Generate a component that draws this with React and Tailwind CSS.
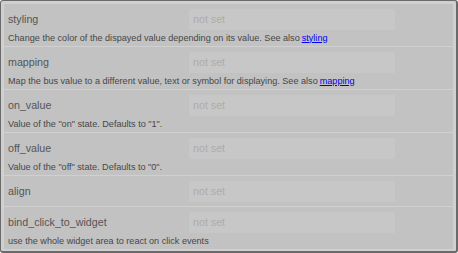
import React from 'react';

const rows = [
  {
    name: 'styling',
    desc: 'Change the color of the dispayed value depending on its value. See also ',
    link: 'styling',
  },
  {
    name: 'mapping',
    desc: 'Map the bus value to a different value, text or symbol for displaying. See also ',
    link: 'mapping',
  },
  { name: 'on_value', desc: 'Value of the "on" state. Defaults to "1".' },
  { name: 'off_value', desc: 'Value of the "off" state. Defaults to "0".' },
  { name: 'align' },
  { name: 'bind_click_to_widget', desc: 'use the whole widget area to react on click events' },
];

function PropertyRow({ row }) {
  return (
    <div className="bg-[#c2c2c2] border-t border-[#d0d0d0] first:border-t-0 pl-1 pt-[5px] pb-[1px]">
      <div className="flex items-center h-[21px]">
        <div className="w-[181px] text-[10.7px] text-[#555555]">{row.name}</div>
        <div className="w-[206px] h-[21px] bg-[#c7c7c7] flex items-center px-1 text-[10.7px] text-[#acacac]">
          not set
        </div>
      </div>
      {row.desc ? (
        <div className="h-[13px] mt-[2px] flex items-center text-[9.1px] text-[#474747] whitespace-nowrap">
          {row.desc}
          {row.link && <a href="#" className="text-[#0000ee] underline ml-[2px]">{row.link}</a>}
        </div>
      ) : (
        <div className="h-[3px]" />
      )}
    </div>
  );
}

export default function App() {
  return (
    <div
      className="w-[458px] h-[253px] bg-[#d0d0d0] border border-[#6a6a6a] border-r-2 border-b-2 rounded-[3px] p-[3px] overflow-hidden"
      style={{ fontFamily: '"Liberation Sans", Arial, sans-serif' }}
    >
      <div className="flex flex-col">
        {rows.map((row) => (
          <PropertyRow key={row.name} row={row} />
        ))}
      </div>
    </div>
  );
}
